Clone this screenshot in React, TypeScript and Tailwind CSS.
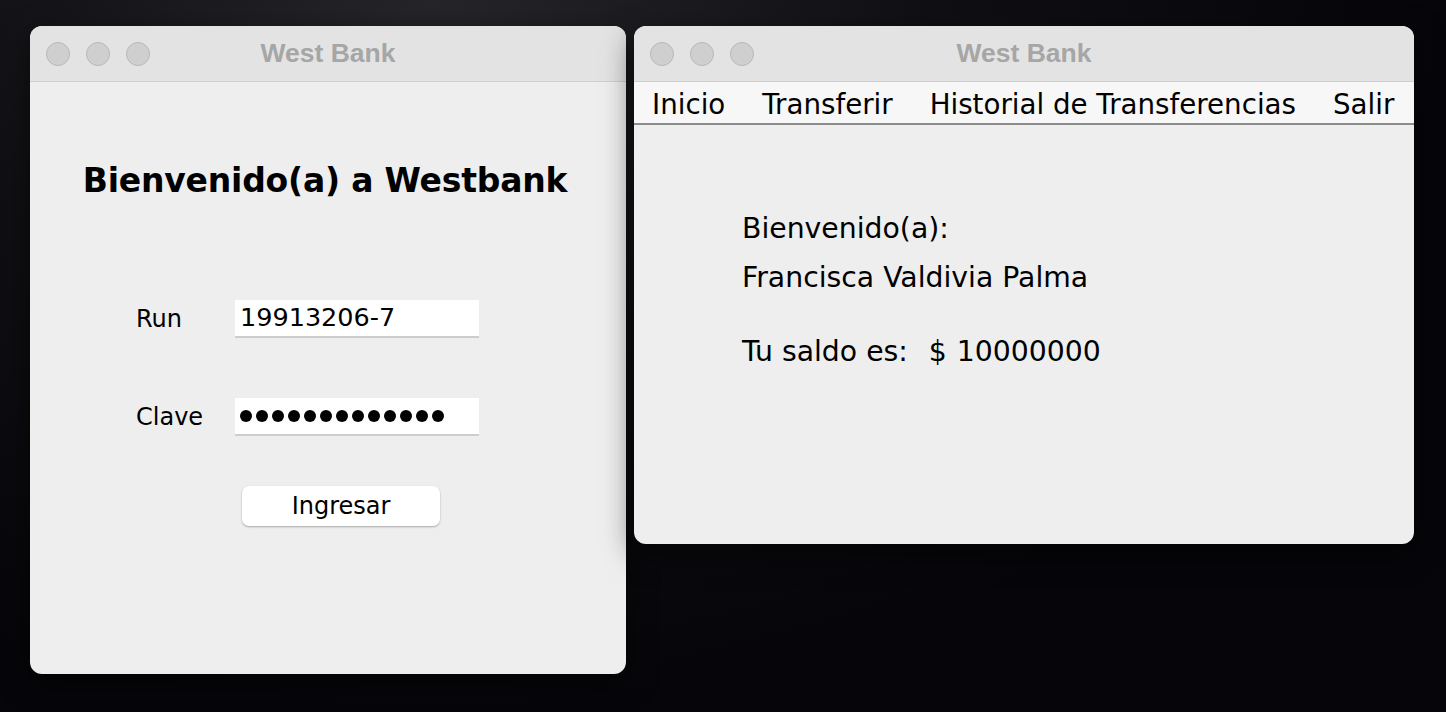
import React from "react";

const body = "font-['DejaVu_Sans',sans-serif]";

function TitleBar({ title }: { title: string }) {
  return (
    <div className="relative flex h-[56px] items-center border-b border-[#cfcfcf] bg-[#e3e3e3] px-[16px]">
      <div className="flex gap-[16px]">
        {[0, 1, 2].map((i) => (
          <span
            key={i}
            className="h-[24px] w-[24px] rounded-full border border-[#b9b9b9] bg-[#cfcfcf]"
          />
        ))}
      </div>
      <div className="pointer-events-none absolute inset-0 flex items-center justify-center pt-[1px] font-['Liberation_Sans',sans-serif] text-[26.5px] font-bold text-[#a6a6a6]">
        {title}
      </div>
    </div>
  );
}

function Field({ label, children }: { label: string; children: React.ReactNode }) {
  return (
    <div className="flex items-center">
      <span className="w-[99px] text-[24px] text-black">{label}</span>
      <div className="flex h-[38px] w-[244px] items-center border-b-2 border-[#cdcdcd] bg-white pl-[5px]">
        {children}
      </div>
    </div>
  );
}

function LoginWindow() {
  return (
    <div className="absolute left-[30px] top-[26px] flex h-[648px] w-[596px] flex-col overflow-hidden rounded-[12px] bg-[#eeeeee] shadow-[0_10px_30px_rgba(0,0,0,0.6)]">
      <TitleBar title="West Bank" />
      <div className={`flex flex-1 flex-col items-center ${body}`}>
        <h1 className="mt-[74px] ml-[-6px] text-[33px] font-bold tracking-[-0.2px] text-black">
          Bienvenido(a) a Westbank
        </h1>
        <div className="mt-[94px] flex flex-col gap-[60px] self-start pl-[106px]">
          <Field label="Run">
            <span className="text-[25.5px] text-black">19913206-7</span>
          </Field>
          <Field label="Clave">
            <div className="flex gap-[4px]">
              {Array.from({ length: 13 }).map((_, i) => (
                <span key={i} className="h-[12px] w-[12px] rounded-full bg-black" />
              ))}
            </div>
          </Field>
        </div>
        <button className="mt-[50px] ml-[26px] h-[40px] w-[198px] rounded-[7px] bg-white text-[24px] text-black shadow-[0_1px_2px_rgba(0,0,0,0.3)]">
          Ingresar
        </button>
      </div>
    </div>
  );
}

function HomeWindow() {
  const menu = ["Inicio", "Transferir", "Historial de Transferencias", "Salir"];
  return (
    <div className="absolute left-[634px] top-[26px] flex h-[518px] w-[780px] flex-col overflow-hidden rounded-[12px] bg-[#eeeeee] shadow-[0_10px_30px_rgba(0,0,0,0.6)]">
      <TitleBar title="West Bank" />
      <div
        className={`flex h-[43px] items-center gap-[37px] whitespace-nowrap border-b-2 border-[#8c8c8c] bg-[#f7f7f7] pl-[18px] pt-[4px] ${body} text-[27.7px] text-black`}
      >
        {menu.map((m) => (
          <span key={m} className="shrink-0">
            {m}
          </span>
        ))}
      </div>
      <div className={`flex flex-col pl-[108px] pt-[84px] ${body} text-[28.3px] text-black`}>
        <span className="leading-[40px]">Bienvenido(a):</span>
        <span className="mt-[9px] leading-[40px]">Francisca Valdivia Palma</span>
        <div className="mt-[34px] flex leading-[40px]">
          <span>Tu saldo es:</span>
          <span className="ml-[21px]">$</span>
          <span className="ml-[10px]">10000000</span>
        </div>
      </div>
    </div>
  );
}

export default function App() {
  return (
    <div className="relative h-[712px] w-[1446px] overflow-hidden bg-[radial-gradient(ellipse_at_30%_0%,#26262a_0%,#101014_35%,#06060a_70%)]">
      <LoginWindow />
      <HomeWindow />
    </div>
  );
}
